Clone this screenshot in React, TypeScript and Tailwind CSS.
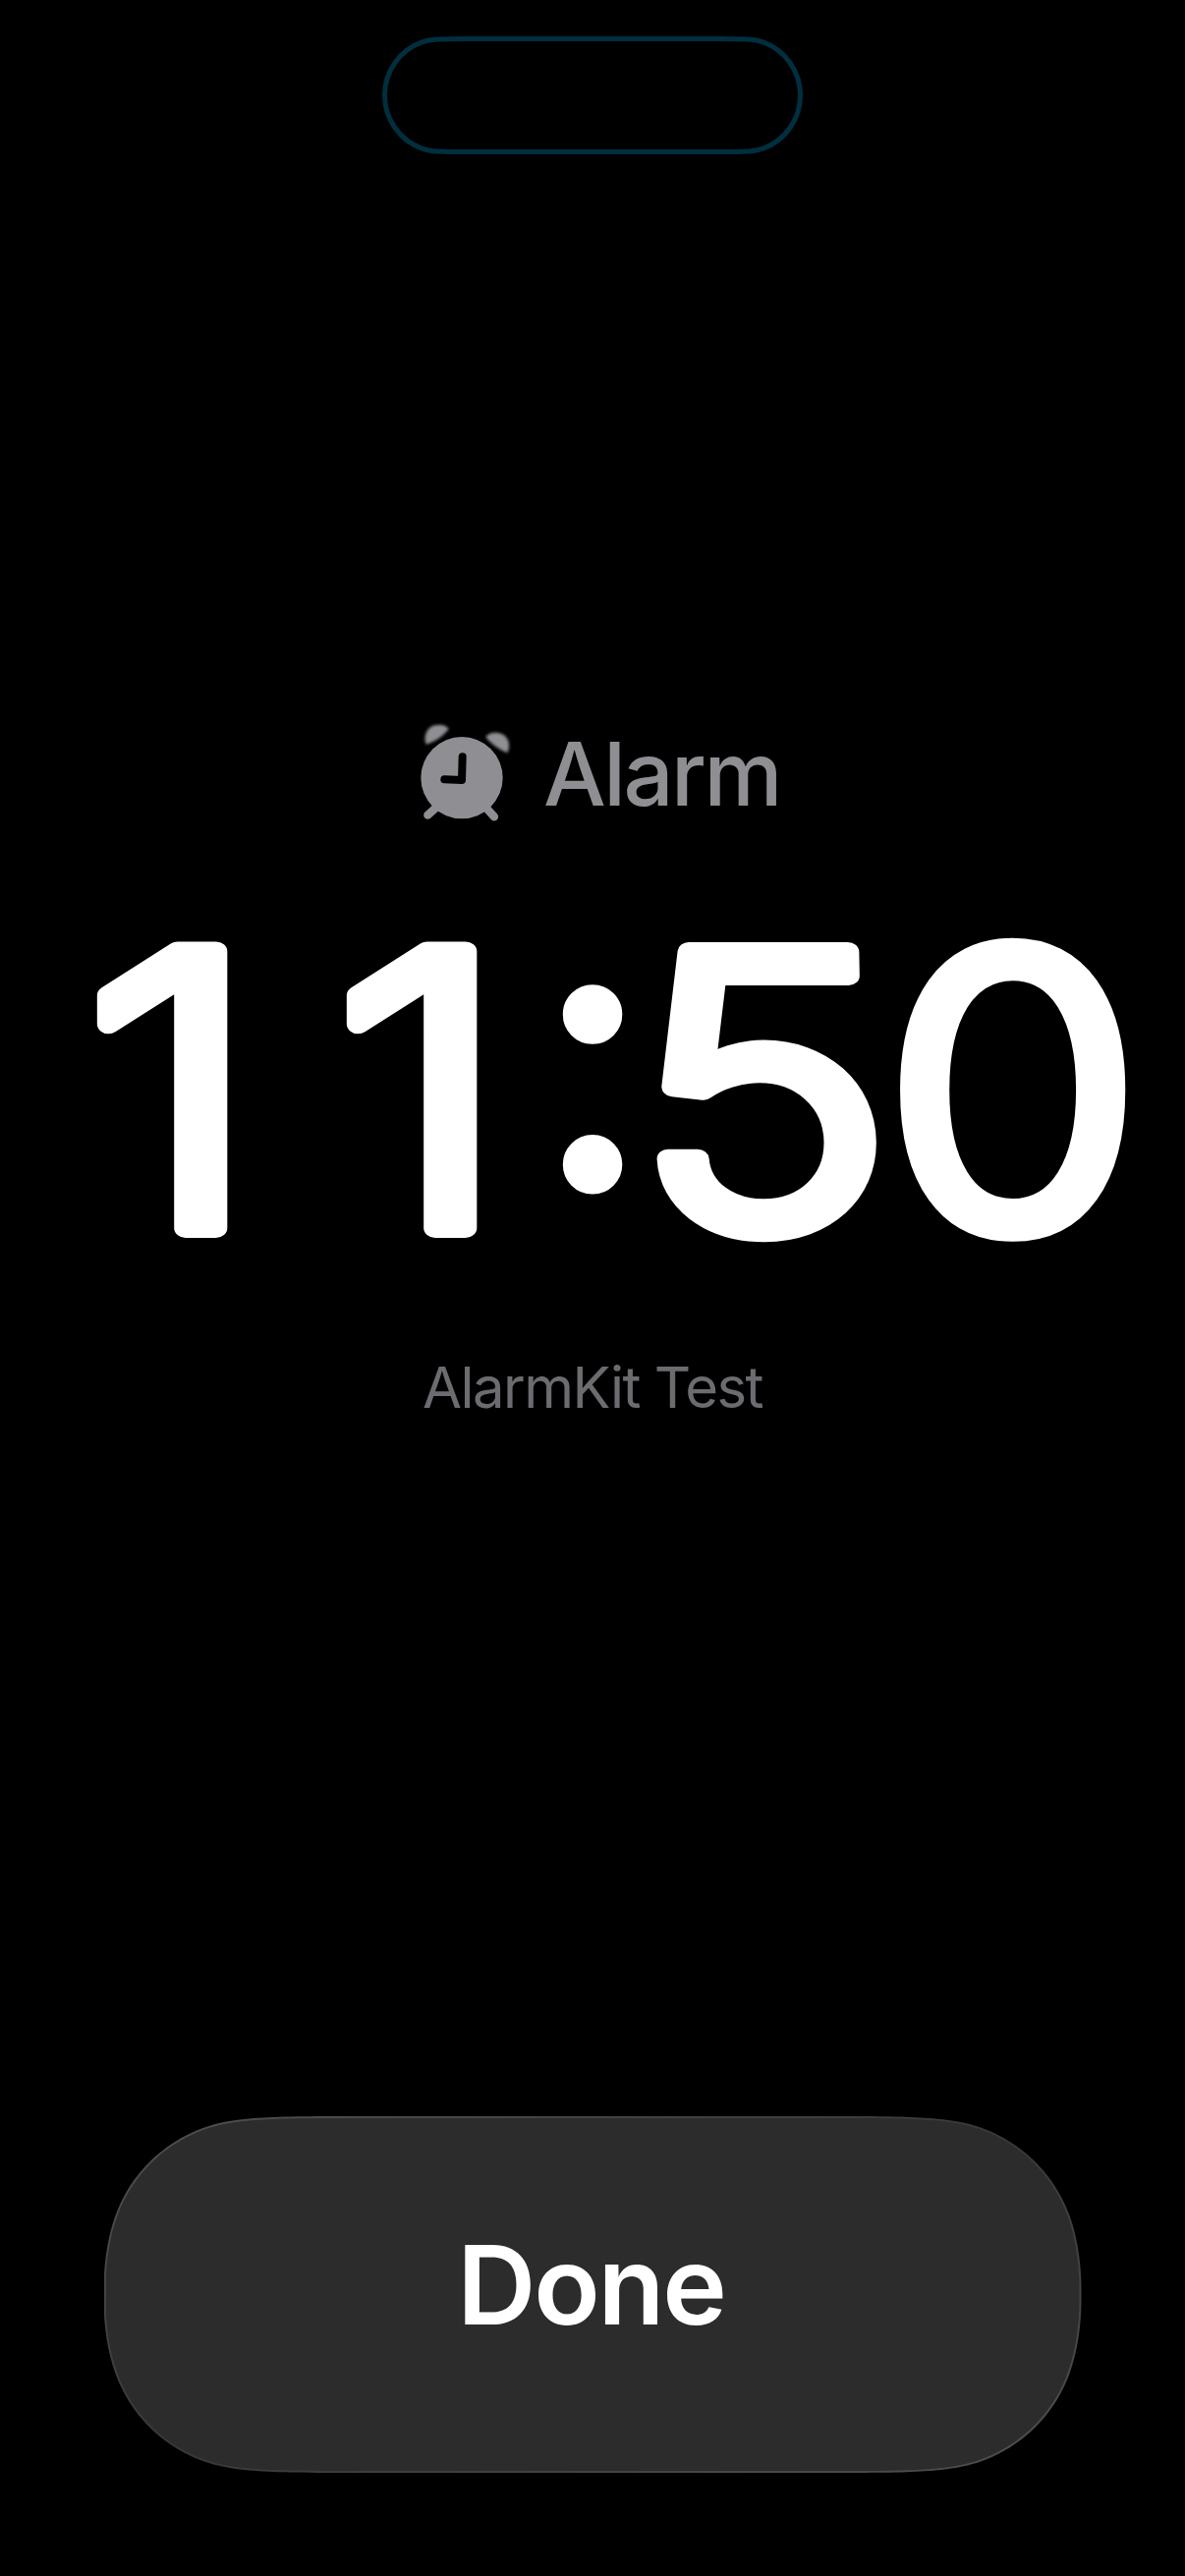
import React from "react";

type Corner = number[][];

// Bezier control points for a corner of radius 1, from the vertical edge to the
// horizontal one. Distances are measured inwards from the corner.
const buttonCorner: Corner = [
  [0, 1.1],
  [0, 0.9375], [0.0256, 0.766], [0.0749, 0.6315],
  [0.1691, 0.3728], [0.3728, 0.1691], [0.6315, 0.0749],
  [0.822, 0.0075], [1.03, 0], [1.56, 0],
];
const capsuleCorner: Corner = [
  [0, 1],
  [0, 0.5796], [0.263, 0.204], [0.658, 0.0603],
  [0.815, 0.004], [0.985, 0], [1.4, 0],
];

// Continuous-curvature rounded rectangle as SVG path data.
function squircle(corner: Corner, w: number, h: number, r: number, o = 0) {
  const pts = corner.map(([x, y]) => [x * r, y * r]);
  const back = [...pts].reverse();
  const tl = pts.map(([x, y]) => `${o + x} ${o + y}`);
  const tr = back.map(([x, y]) => `${w - o - x} ${o + y}`);
  const br = pts.map(([x, y]) => `${w - o - x} ${h - o - y}`);
  const bl = back.map(([x, y]) => `${o + x} ${h - o - y}`);
  const seg = (p: string[]) => `L${p[0]}C${p.slice(1).join(" ")}`;
  return `M${tl[0]}${seg(tl)}${seg(tr)}${seg(br)}${seg(bl)}Z`;
}

function Island() {
  return (
    <svg className="mt-[37px] h-[120px] w-[428px] shrink-0" viewBox="0 0 428 120" fill="none">
      <path d={squircle(capsuleCorner, 428, 120, 57.5, 2.5)} stroke="#002f3f" strokeWidth="5" strokeLinejoin="round" />
    </svg>
  );
}

function AlarmIcon() {
  return (
    <svg className="h-[120px] w-[115px] shrink-0" viewBox="0 0 345 360" fill="none">
      <g fill="#8e8e93" className="blur-[5px]">
        <path d="M56 98C46 74 58 46 82 40C100 36 116 38 125 50C113 69 83 90 56 98Z" />
        <path d="M238 75C248 61 272 58 289 67C310 79 314 104 304 124C284 117 251 95 238 75Z" />
      </g>
      <g stroke="#8e8e93" strokeWidth="25" strokeLinecap="round">
        <path d="M61 314L92 286M264 319L236 288" />
      </g>
      <circle cx="165" cy="200" r="125" fill="#8e8e93" />
      <path d="M167 136L165 207L112 205" stroke="#000" strokeWidth="24" strokeLinecap="round" strokeLinejoin="round" />
    </svg>
  );
}

const glyphs = [
  { ch: "1", x: 85.6, y: 390, sx: 1.165, skew: 0, weight: 300, stroke: 20 },
  { ch: "1", x: 339.6, y: 390, sx: 1.165, skew: 0, weight: 300, stroke: 20 },
  { ch: ":", x: 547.3, y: 348.4, sx: 1, skew: 0, weight: 400, stroke: 9.5 },
  { ch: "5", x: 646, y: 390.5, sx: 1.152, skew: 1.1, weight: 300, stroke: 20 },
  { ch: "0", x: 899.9, y: 390, sx: 1.094, skew: 0, weight: 300, stroke: 20 },
];

function Clock() {
  return (
    <svg className="mt-[15px] h-[500px] w-full shrink-0" viewBox="0 0 1206 500" role="img" aria-label="11:50">
      <g fill="#fff" stroke="#fff" strokeLinejoin="round" fontFamily="Inter, sans-serif" fontSize="387">
        {glyphs.map((g, i) => (
          <text
            key={i}
            fontWeight={g.weight}
            strokeWidth={g.stroke}
            transform={`translate(${g.x} ${g.y}) skewX(${g.skew}) scale(${g.sx} 1)`}
          >
            {g.ch}
          </text>
        ))}
      </g>
    </svg>
  );
}

export default function App() {
  return (
    <main className="flex h-[2622px] w-[1206px] flex-col items-center overflow-hidden bg-black font-['Inter',sans-serif]">
      <Island />
      <header className="mt-[568px] flex h-[120px] w-full shrink-0 items-center pl-[415px]">
        <AlarmIcon />
        <h1 className="mt-1.5 ml-[23px] text-[90px] leading-[100px] font-medium tracking-[-2.5px] whitespace-nowrap text-[#8e8e93]">
          Alarm
        </h1>
      </header>
      <Clock />
      <p className="mt-3 h-20 shrink-0 text-[58px] leading-[80px] font-normal tracking-[-1.5px] whitespace-nowrap text-[#6c6c70]">
        AlarmKit Test
      </p>
      <button
        className="mt-[702px] h-[363px] w-[995px] shrink-0 bg-linear-to-br from-[#505050] via-[#373737] to-[#505050] p-0.5"
        style={{ clipPath: `path("${squircle(buttonCorner, 995, 363, 160)}")` }}
      >
        <span
          className="flex h-[359px] w-[991px] items-center justify-center bg-[#2c2c2c] pr-[3px] pb-5 text-[111px] leading-none font-semibold tracking-[-2.2px] text-white"
          style={{ clipPath: `path("${squircle(buttonCorner, 991, 359, 158)}")` }}
        >
          Done
        </span>
      </button>
    </main>
  );
}
